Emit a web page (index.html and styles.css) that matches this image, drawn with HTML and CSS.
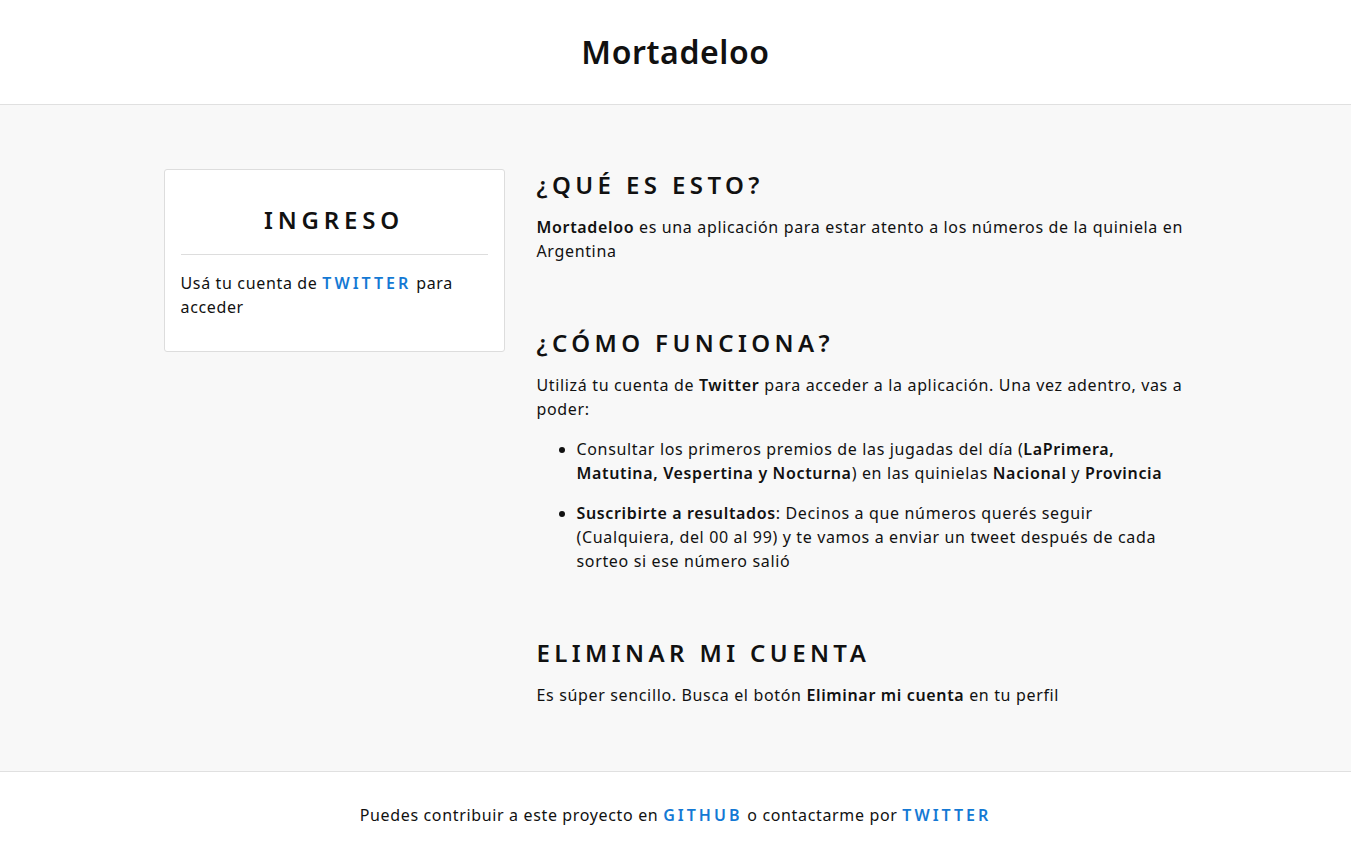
FILE: index.html
```html
<!DOCTYPE html>
<html lang="es">
<head>
<meta charset="utf-8">
<title>Mortadeloo</title>
<link rel="stylesheet" href="styles.css">
</head>
<body>
<header class="site-header">
  <h1 class="site-title">Mortadeloo</h1>
</header>
<main class="main">
  <div class="container">
    <aside class="card">
      <h2 class="card-title">INGRESO</h2>
      <hr class="divider">
      <p class="card-text">Usá tu cuenta de <a class="link" href="#">TWITTER</a> para acceder</p>
    </aside>
    <div class="content">
      <section class="section">
        <h2 class="section-title">¿QUÉ ES ESTO?</h2>
        <p class="text"><strong>Mortadeloo</strong> es una aplicación para estar atento a los números de la quiniela en Argentina</p>
      </section>
      <section class="section">
        <h2 class="section-title">¿CÓMO FUNCIONA?</h2>
        <p class="text">Utilizá tu cuenta de <strong>Twitter</strong> para acceder a la aplicación. Una vez adentro, vas a poder:</p>
        <ul class="list">
          <li>Consultar los primeros premios de las jugadas del día (<strong>LaPrimera, Matutina, Vespertina y Nocturna</strong>) en las quinielas <strong>Nacional</strong> y <strong>Provincia</strong></li>
          <li><strong>Suscribirte a resultados</strong>: Decinos a que números querés seguir (Cualquiera, del 00 al 99) y te vamos a enviar un tweet después de cada sorteo si ese número salió</li>
        </ul>
      </section>
      <section class="section">
        <h2 class="section-title">ELIMINAR MI CUENTA</h2>
        <p class="text">Es súper sencillo. Busca el botón <strong>Eliminar mi cuenta</strong> en tu perfil</p>
      </section>
    </div>
  </div>
</main>
<footer class="site-footer">
  <p class="footer-text">Puedes contribuir a este proyecto en <a class="link" href="#">GITHUB</a> o contactarme por <a class="link" href="#">TWITTER</a></p>
</footer>
</body>
</html>
```
FILE: styles.css
```css
* { box-sizing: border-box; }
html, body { margin: 0; padding: 0; }
body {
  font-family: "Noto Sans", "Open Sans", sans-serif;
  font-size: 16px;
  line-height: 24px;
  color: #111;
  background: #fff;
  letter-spacing: 0.65px;
}
strong { font-weight: 600; }
.site-header {
  height: 105px;
  border-bottom: 1px solid #e0e0e0;
  display: flex;
  align-items: center;
  justify-content: center;
}
.site-title {
  margin: 0;
  font-size: 32px;
  line-height: 40px;
  font-weight: 600;
  letter-spacing: 0.6px;
}
.main {
  background: #f8f8f8;
  padding: 64px 0;
}
.container {
  width: 1024px;
  margin: 0 auto;
  display: grid;
  grid-template-columns: 341px 1fr;
  column-gap: 32px;
  align-items: start;
}
.card {
  background: #fff;
  border: 1px solid #ddd;
  border-radius: 3px;
  padding: 16px;
}
.card-title {
  margin: 18px 0;
  text-align: center;
  font-size: 24px;
  line-height: 32px;
  font-weight: 600;
  letter-spacing: 4.8px;
}
.divider {
  border: 0;
  border-top: 1px solid #ddd;
  margin: 0 0 16px;
}
.card-text { margin: 0 0 16px; }
.link {
  color: #1479d4;
  text-decoration: none;
  font-weight: 600;
  letter-spacing: 3px;
}
.section { margin-bottom: 64px; }
.section:last-child { margin-bottom: 0; }
.section-title {
  margin: 0 0 14px;
  font-size: 24px;
  line-height: 32px;
  font-weight: 600;
  letter-spacing: 4.4px;
}
.text { margin: 0; }
.list {
  margin: 16px 0 0;
  padding-left: 40px;
}
.list li + li { margin-top: 16px; }
.site-footer {
  border-top: 1px solid #e0e0e0;
  padding: 31px 0 32px;
  text-align: center;
}
.footer-text { margin: 0; }
```
